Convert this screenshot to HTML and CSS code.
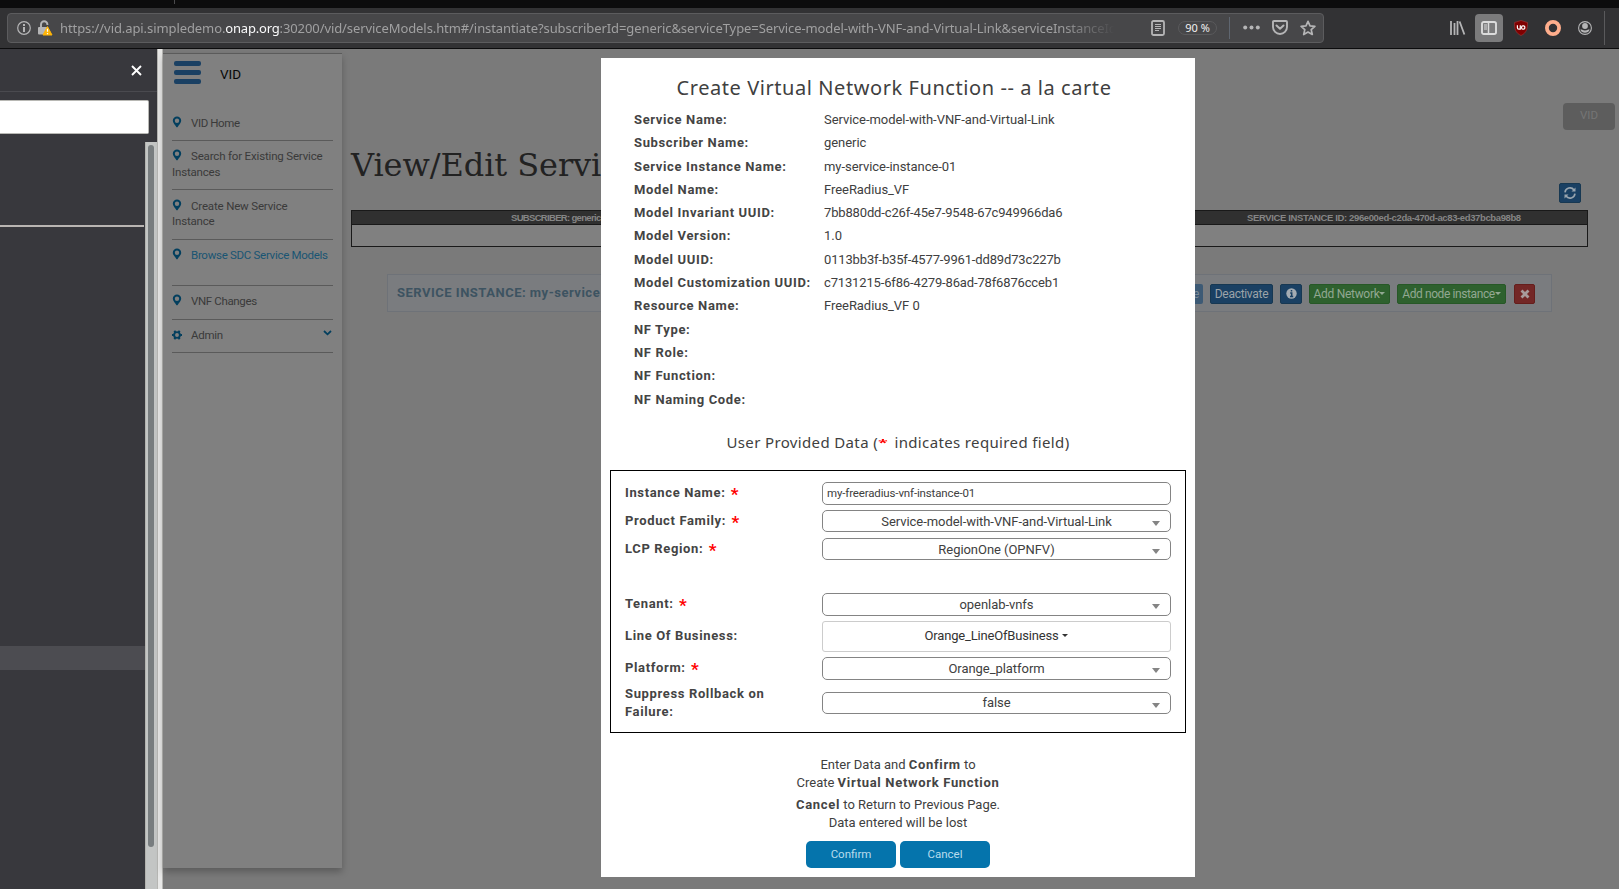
FILE: index.html
```html
<!DOCTYPE html>
<html lang="en">
<head>
<meta charset="utf-8">
<title>VID</title>
<link rel="stylesheet" href="styles.css">
</head>
<body>
<svg class="defs" width="0" height="0">
  <symbol id="pin" viewBox="0 0 10 12"><path fill-rule="evenodd" d="M5 .5a4.2 4.2 0 0 1 4.2 4.2C9.200 7 6.800 8.600 5.500 11.200h-1C3.200 8.600.8 7 .8 4.700A4.200 4.200 0 0 1 5 .5zM5 2.500a2.200 2.200 0 1 0 0 4.400 2.200 2.200 0 0 0 0-4.400z"/></symbol>
</svg>
<div class="tabstrip"><i></i></div>
<header class="toolbar">
  <div class="urlbar">
    <svg class="info" width="14" height="14" viewBox="0 0 14 14"><circle cx="7" cy="7" r="6.300" fill="none" stroke="#b5b5b6" stroke-width="1.200"/><rect x="6" y="3" width="2" height="2" fill="#b5b5b6"/><rect x="6" y="6" width="2" height="5" fill="#b5b5b6"/></svg>
    <svg class="lock" width="15" height="16" viewBox="0 0 15 16"><path d="M3 8V4.500a3.200 3.200 0 0 1 6.400 0V5" fill="none" stroke="#b5b5b6" stroke-width="1.900"/><rect x="0" y="7" width="10" height="7.500" rx="1" fill="#b5b5b6"/><path d="M9.500 6.600 14 15H5z" fill="#ffb508" stroke="#ffb508" stroke-linejoin="round"/><path d="M9.500 8.800v3M9.500 13v1.300" stroke="#fff" stroke-width="1.200"/></svg>
    <div class="url">https://vid.api.simpledemo.<b>onap.org</b>:30200/vid/serviceModels.htm#/instantiate?subscriberId=generic&amp;serviceType=Service-model-with-VNF-and-Virtual-Link&amp;serviceInstanceId</div>
    <svg class="reader" width="14" height="16" viewBox="0 0 14 16"><rect x="1" y="1" width="12" height="14" rx="1.500" fill="none" stroke="#b5b5b6" stroke-width="1.800"/><path d="M4 4.500h6M4 6.500h6M4 8.500h6M4 10.500h4" stroke="#b5b5b6"/></svg>
    <span class="pill">90 %</span>
    <i class="bar"></i>
    <svg class="dots" width="17" height="5" viewBox="0 0 17 5"><g fill="#b5b5b6"><circle cx="2.200" cy="2.500" r="2"/><circle cx="8.500" cy="2.500" r="2"/><circle cx="14.800" cy="2.500" r="2"/></g></svg>
    <svg class="pocket" width="16" height="15" viewBox="0 0 16 15"><path d="M2 1h12q1 0 1 1v5a7 7 0 0 1-14 0V2q0-1 1-1z" fill="none" stroke="#b5b5b6" stroke-width="1.900"/><path d="M4.500 5.500 8 8.800l3.500-3.300" fill="none" stroke="#b5b5b6" stroke-width="2" stroke-linecap="round" stroke-linejoin="round"/></svg>
    <svg width="16" height="16" viewBox="0 0 16 16"><path d="m8 1.300 2 4.500 4.900.5-3.700 3.300 1.100 4.900L8 12l-4.300 2.500 1.100-4.900L1.100 6.300 6 5.800z" fill="none" stroke="#b5b5b6" stroke-width="1.700" stroke-linejoin="round"/></svg>
  </div>
  <div class="tools">
    <svg width="16" height="14" viewBox="0 0 16 14"><path d="M1 0v14M4.500 2v12M7.500 0v14M9.600.5l4.800 13" fill="none" stroke="#b5b5b6" stroke-width="1.800"/></svg>
    <span class="active"><svg width="16" height="14" viewBox="0 0 16 14"><rect x="1" y="1" width="14" height="12" rx="1.800" fill="none" stroke="#dcdcdc" stroke-width="1.900"/><path d="M7.500 1v12" stroke="#dcdcdc" stroke-width="1.500"/><path d="M3 4h3M3 6h3M3 8h3" stroke="#dcdcdc"/></svg></span>
    <svg class="ublock" width="16" height="16" viewBox="0 0 16 16"><path d="M8 .5 14.500 2.500c.3 6-1 10.500-6.500 13C2.500 13 1.200 8.500 1.500 2.500z" fill="#800000" stroke="#a03a3a" stroke-width=".6"/><path d="M4.400 5.300v2.400q0 1.500 1.400 1.500h1.500V5.300" fill="none" stroke="#fff" stroke-width="1.200"/><rect x="8.600" y="5.900" width="3.200" height="3.200" rx="1.200" fill="none" stroke="#fff" stroke-width="1.200"/></svg>
    <svg width="16" height="16" viewBox="0 0 16 16"><circle cx="8" cy="8" r="6.100" fill="none" stroke="#ffae8c" stroke-width="3.800"/></svg>
    <svg width="14" height="14" viewBox="0 0 14 14"><circle cx="7" cy="7" r="6.400" fill="none" stroke="#b5b5b6" stroke-width="1.100"/><circle cx="7" cy="5" r="2.900" fill="#b5b5b6"/><path d="M2.300 8.500h1.500q3.200 2 6.400 0h1.500a5 5 0 0 1-9.400 0z" fill="#b5b5b6"/></svg>
    <i class="end"></i>
  </div>
</header>
<div class="content">
  <aside class="browser-side">
    <div class="side-head"><svg width="11" height="11" viewBox="0 0 11 11"><path d="m1 1 9 9M10 1l-9 9" stroke="#fff" stroke-width="1.900"/></svg></div>
    <div class="side-search"></div>
    <div class="side-body">
      <div class="tree"><div class="rule"></div><div class="sel"></div></div>
      <div class="scroll"><div class="thumb"></div></div>
    </div>
  </aside>
  <div class="splitter"></div>
  <nav class="nav">
    <div class="brand"><span class="burger"><i></i><i></i><i></i></span><span class="name">VID</span></div>
    <ul>
      <li class="n1"><svg class="pin"><use href="#pin"/></svg>VID Home</li>
      <li class="n2"><svg class="pin"><use href="#pin"/></svg>Search for Existing Service Instances</li>
      <li class="n3"><svg class="pin"><use href="#pin"/></svg>Create New Service<br>Instance</li>
      <li class="n4"><svg class="pin"><use href="#pin"/></svg>Browse SDC Service Models</li>
      <li class="n5"><svg class="pin"><use href="#pin"/></svg>VNF Changes</li>
      <li class="n6"><svg class="pin" viewBox="0 0 10 10"><circle cx="5" cy="5" r="2.900" fill="none" stroke="#033f5e" stroke-width="1.900"/><g stroke="#033f5e" stroke-width="2"><path d="M0 5h1.800M8.200 5H10M2.400.8l.9 1.500M7.600.8l-.9 1.500M2.400 9.200l.9-1.500M7.600 9.200l-.9-1.500"/></g></svg>Admin<svg class="chev" width="9" height="6" viewBox="0 0 9 6"><path d="m1 1 3.500 3.300L8 1" fill="none" stroke="#033f5e" stroke-width="1.800"/></svg></li>
    </ul>
  </nav>
  <main class="main">
    <div class="vidrow"><span class="vidbtn">VID</span></div>
    <h1>View/Edit Servi</h1>
    <div class="refresh"><span class="btn blue"><svg width="12" height="12" viewBox="0 0 12 12"><path d="M1 5.300A5 5 0 0 1 10 3M11 6.700A5 5 0 0 1 2 9" fill="none" stroke="#99a5af" stroke-width="1.600"/><path d="M11.500.5v4h-4zM.5 11.500v-4h4z" fill="#99a5af"/></svg></span></div>
    <div class="table">
      <div class="thead"><span class="subscriber">SUBSCRIBER: generic</span><span>SERVICE INSTANCE ID: 296e00ed-c2da-470d-ac83-ed37bcba98b8</span></div>
      <div class="tbody"></div>
    </div>
    <div class="panel">
      <span class="ptitle">SERVICE INSTANCE: my-service</span>
      <span class="btn pale">e</span>
      <span class="btn blue deact">Deactivate</span>
      <span class="btn blue inf"><svg width="11" height="11" viewBox="0 0 11 11"><circle cx="5.500" cy="5.500" r="5.200" fill="#a3abb2"/><path d="M5.500 2v1.600M4.200 5h1.500v3.300M4 8.500h3.200" fill="none" stroke="#1a4063" stroke-width="1.500"/></svg></span>
      <span class="btn green net">Add Network<i class="caret"></i></span>
      <span class="btn green node">Add node instance<i class="caret"></i></span>
      <span class="btn red"><svg width="10" height="10" viewBox="0 0 10 10"><path d="m1.500 1.500 7 7M8.500 1.500l-7 7" stroke="#a89a9a" stroke-width="2.800"/></svg></span>
    </div>
  </main>
</div>

<section class="modal">
  <h2>Create Virtual Network Function -- a la carte</h2>
  <dl class="facts">
    <dt>Service Name:</dt><dd>Service-model-with-VNF-and-Virtual-Link</dd>
    <dt>Subscriber Name:</dt><dd>generic</dd>
    <dt>Service Instance Name:</dt><dd>my-service-instance-01</dd>
    <dt>Model Name:</dt><dd>FreeRadius_VF</dd>
    <dt>Model Invariant UUID:</dt><dd class="uuid">7bb880dd-c26f-45e7-9548-67c949966da6</dd>
    <dt>Model Version:</dt><dd>1.0</dd>
    <dt>Model UUID:</dt><dd class="uuid">0113bb3f-b35f-4577-9961-dd89d73c227b</dd>
    <dt>Model Customization UUID:</dt><dd class="uuid">c7131215-6f86-4279-86ad-78f6876cceb1</dd>
    <dt>Resource Name:</dt><dd>FreeRadius_VF 0</dd>
    <dt>NF Type:</dt><dd></dd>
    <dt>NF Role:</dt><dd></dd>
    <dt>NF Function:</dt><dd></dd>
    <dt>NF Naming Code:</dt><dd></dd>
  </dl>
  <h3>User Provided Data (<em>*</em> indicates required field)</h3>
  <div class="form">
    <div class="row"><label>Instance Name: <em>*</em></label><div class="field text">my-freeradius-vnf-instance-01</div></div>
    <div class="row"><label>Product Family: <em>*</em></label><div class="field">Service-model-with-VNF-and-Virtual-Link<i></i></div></div>
    <div class="row lcp"><label>LCP Region: <em>*</em></label><div class="field">RegionOne (OPNFV)<i></i></div></div>
    <div class="row tenant"><label>Tenant: <em>*</em></label><div class="field tall">openlab-vnfs<i></i></div></div>
    <div class="row lob"><label>Line Of Business:</label><div class="field drop">Orange_LineOfBusiness<i></i></div></div>
    <div class="row plat"><label>Platform: <em>*</em></label><div class="field tall">Orange_platform<i></i></div></div>
    <div class="row sup"><label>Suppress Rollback on Failure:</label><div class="field">false<i></i></div></div>
  </div>
  <p class="p1">Enter Data and <b>Confirm</b> to<br>Create <b>Virtual Network Function</b></p>
  <p><b>Cancel</b> to Return to Previous Page.<br>Data entered will be lost</p>
  <div class="actions"><button>Confirm</button><button>Cancel</button></div>
</section>
</body>
</html>
```
FILE: styles.css
```css
* { box-sizing: border-box; }
body { margin: 0; width: 1619px; height: 889px; overflow: hidden; position: relative; display: flex; flex-direction: column; background: #7a7a7a; font-family: Roboto, "Liberation Sans", sans-serif; }
.defs { position: absolute; }
svg { flex: none; display: block; }

.tabstrip { height: 8px; flex: none; background: #0c0c0d; }
.tabstrip i { display: block; width: 1px; height: 4px; margin-left: 174px; background: #4a4a4c; }
.toolbar { height: 41px; flex: none; display: flex; align-items: center; justify-content: space-between; padding: 0 14px 1px 7px; background: #323234; border-bottom: 1px solid #0c0c0d; }
.urlbar { width: 1317px; height: 30px; display: flex; align-items: center; padding: 0 7px 0 9px; background: #474749; border: 1px solid #5c5c5e; border-radius: 4px; }
.info { margin-right: 7px; }
.lock { margin-right: 7px; }
.url { width: 1057px; flex: none; overflow: hidden; white-space: nowrap; font: 13px/20px "Noto Sans", sans-serif; letter-spacing: -.085px; color: #a0a0a1; -webkit-mask-image: linear-gradient(to right, #000 1000px, transparent 1055px); mask-image: linear-gradient(to right, #000 1000px, transparent 1055px); }
.url b { font-weight: 400; color: #f9f9fa; letter-spacing: -.2px; }
.reader { margin-left: 34px; }
.pill { width: 42px; height: 14px; margin-left: 13px; border: 1px solid #5a5a5c; border-radius: 7px; font: 11px/12px "Noto Sans", sans-serif; text-align: center; color: #f0f0f0; }
.bar { width: 1px; height: 22px; margin-left: 12px; background: #5f6670; }
.dots { margin-left: 13px; }
.pocket { margin: 0 12px 0 12px; }
.tools { display: flex; align-items: center; }
.tools > svg:first-child { margin-right: -1px; }
.active { width: 28px; height: 28px; display: flex; align-items: center; justify-content: center; margin: 0 10px; border-radius: 4px; background: #7b7b7c; }
.ublock { margin-right: 16px; }
.tools .ublock + svg { margin-right: 17px; }
.end { width: 1px; height: 34px; margin-left: 12px; background: #5a5a5c; }

.content { flex: 1; min-height: 0; display: flex; }
.browser-side { width: 157px; flex: none; display: flex; flex-direction: column; background: #38383d; }
.side-head { height: 43px; flex: none; display: flex; justify-content: flex-end; padding: 16px 15.500px 0 0; border-bottom: 1px solid #4a4a4f; }
.side-search { height: 34px; flex: none; margin: 8px 8px 8px 0; background: #fff; border: 1px solid #b8b8b4; border-left: 0; border-radius: 0 2px 2px 0; }
.side-body { flex: 1; display: flex; }
.tree { width: 145px; padding-top: 83px; }
.rule { height: 2px; width: 144px; background: #b9b5b2; }
.sel { height: 24px; margin-top: 419px; background: #4c4c51; }
.scroll { width: 12px; padding: 3px 3px 0 2px; background: #c3c5c4; border-left: 1px solid #b2b2ae; }
.thumb { width: 6px; height: 702px; border-radius: 3px; background: #787d7f; }
.splitter { width: 6px; flex: none; background: #e8e8e7; border: solid #b6b6b3; border-width: 0 1px; }

.nav { width: 179px; height: 815px; flex: none; margin-top: 4px; padding: 0 9px; background: #808080; border-top: 1px solid #5b5b5b; box-shadow: 0 4px 7px rgba(0,0,0,.25); }
.brand { display: flex; align-items: center; gap: 19px; height: 38px; padding: 3px 0 0 2px; font-size: 13.500px; color: #080808; }
.name { margin-top: -2px; }
.burger { display: flex; flex-direction: column; gap: 4px; width: 27px; margin-top: -4px; }
.burger i { height: 5px; border-radius: 2px; background: #1a4063; }
.nav ul { list-style: none; margin: 20px 0 0; padding: 0; font-size: 11.500px; line-height: 16px; letter-spacing: -.17px; color: #3a3a3a; }
.nav li { border-bottom: 1px solid #5a5a5a; position: relative; }
.pin { width: 10px; height: 12px; display: inline-block; vertical-align: -1px; margin: 0 9px 0 0; fill: #033f5e; }
.n1 { height: 29px; padding-top: 3px; letter-spacing: -.4px; }
.n2 { height: 49px; padding-top: 7px; }
.n3 { height: 50px; padding-top: 9px; line-height: 15px; }
.n4 { height: 46px; padding-top: 7px; color: #195573; white-space: nowrap; letter-spacing: -.29px; }
.n5 { height: 34px; padding-top: 7px; letter-spacing: -.35px; }
.n6 { height: 33px; padding-top: 7px; letter-spacing: -.3px; }
.n6 .pin { height: 10px; }
.chev { position: absolute; right: 1px; top: 10px; }

.main { flex: 1; min-width: 0; padding-left: 9px; }
.vidrow { height: 81px; display: flex; justify-content: flex-end; align-items: flex-end; padding-right: 4px; }
.vidbtn { width: 52px; height: 27px; border-radius: 4px; background: #5d5d5d; color: #757575; font-size: 11.500px; line-height: 24px; text-align: center; }
.main h1 { margin: 16px 0 0; height: 37px; font: 32px/38px "DejaVu Serif", serif; letter-spacing: -.08px; color: #222; white-space: nowrap; }
.refresh { display: flex; justify-content: flex-end; padding-right: 38px; height: 20px; }
.btn { height: 20px; flex: none; display: flex; align-items: center; justify-content: center; border-radius: 2px; font-size: 12px; letter-spacing: -.3px; color: #9ca3a8; white-space: nowrap; }
.refresh .btn { width: 22px; }
.blue { background: #1a4063; border: 1px solid #173852; }
.green { background: #2e612e; border: 1px solid #275827; color: #92a892; }
.red { width: 21px; background: #732726; border: 1px solid #651e1c; }
.pale { width: 14px; background: #3d5a75; color: #7d8c9a; }
.table { width: 1237px; height: 37px; margin-top: 7px; border: 1px solid #191919; background: #808080; }
.thead { height: 14px; display: flex; background: #303030; border-bottom: 1px solid #191919; font: bold 9.500px/14px "Liberation Sans", sans-serif; letter-spacing: -.38px; color: #858585; white-space: nowrap; }
.thead span { width: 411px; padding-left: 3px; text-align: center; }
.thead .subscriber { padding: 0 0 0 159px; text-align: left; letter-spacing: -.68px; }
.thead span:last-child { margin-left: 416px; }
.panel { width: 1165px; height: 38px; margin: 27px 0 0 36px; padding: 1px 16px 0 9px; display: flex; align-items: center; border: 1px solid #6e7278; background: #7a7c7f; }
.ptitle { flex: 1; margin-top: -3px; font-size: 13px; font-weight: 700; letter-spacing: .5px; color: #3d5361; }
.deact { width: 63px; margin: 0 7px; }
.inf { width: 22px; margin-right: 7px; }
.net { width: 81px; margin-right: 7px; }
.node { width: 109px; margin-right: 8px; letter-spacing: -.4px; }
.caret { border: 3px solid transparent; border-top-color: #92a892; border-bottom: 0; }

.modal { position: absolute; left: 601px; top: 58px; width: 594px; height: 819px; padding: 0 9px; background: #fff; color: #404040; font-size: 13px; display: flex; flex-direction: column; }
.modal h2 { margin: 16px 0 6px; padding-right: 8px; font: 400 20px/28px "Noto Sans", sans-serif; letter-spacing: .57px; text-align: center; white-space: nowrap; }
.facts { margin: 0 0 0 24px; display: grid; grid-template-columns: 190px 1fr; grid-auto-rows: 23.300px; line-height: 23.300px; }
.facts dt, label { font-weight: 700; letter-spacing: .64px; white-space: nowrap; color: #444; }
.facts dd { margin: 0; letter-spacing: -.05px; }
.facts .uuid { letter-spacing: -.15px; }
.modal h3 { margin: 19px 0 16px; font: 400 15px/24px "Noto Sans", sans-serif; letter-spacing: .36px; text-align: center; }
em { font-style: normal; color: #f00; }
.modal h3 em { display: inline-block; margin-right: 2px; font-weight: 700; font-size: 18px; line-height: 10px; vertical-align: -3px; transform: scaleY(.5); transform-origin: 50% 20%; }
label em { font-size: 17px; line-height: 10px; vertical-align: -3px; margin-left: 1.500px; }
.form { height: 263px; padding: 11px 14px 0; border: 1px solid #000; }
.row { display: grid; grid-template-columns: 197px 349px; height: 23px; margin-bottom: 5px; line-height: 21px; }
.field { position: relative; height: 22px; border: 1px solid #848484; border-radius: 5px; text-align: center; letter-spacing: -.05px; }
.field.tall { height: 23px; }
.field.text { height: 23px; padding-left: 4px; text-align: left; font-size: 11.500px; letter-spacing: -.14px; }
.field i { position: absolute; right: 10px; top: 10px; border: 4px solid transparent; border-top: 5px solid #848484; border-bottom: 0; }
.lcp { margin-bottom: 32px; }
.field.drop { height: 31px; line-height: 28px; border-color: #ccc; border-radius: 3px; color: #333; letter-spacing: -.18px; }
.field.drop i { position: static; display: inline-block; vertical-align: 3px; margin-left: 4px; border: 3px solid transparent; border-top-color: #333; border-bottom: 0; }
.lob { height: 31px; line-height: 29px; }
.plat { margin-bottom: 3px; }
.sup label { white-space: normal; line-height: 18px; width: 160px; padding-top: 2px; }
.sup .field { margin-top: 9px; line-height: 20px; }
.modal p { margin: 4px 0 0; line-height: 18px; text-align: center; }
.modal .p1 { margin-top: 23px; }
.modal p b { letter-spacing: .68px; color: #444; }
.actions { display: flex; justify-content: center; gap: 4px; margin-top: 9px; }
.actions button { width: 90px; height: 27px; border: 0; border-radius: 5px; background: #0574ac; color: #b8dcec; font: 11.500px Roboto, sans-serif; padding-bottom: 2px; }
```
